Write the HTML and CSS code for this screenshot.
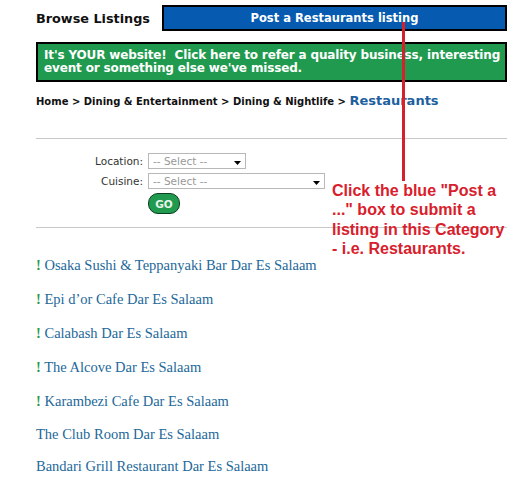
FILE: index.html
```html
<!DOCTYPE html>
<html>
<head>
<meta charset="utf-8">
<link rel="stylesheet" href="styles.css">
</head>
<body>
<div class="page">
  <div class="header">
    <div class="title">Browse Listings</div>
    <div class="post-box">Post a Restaurants listing</div>
  </div>
  <div class="refer">It's YOUR website!&nbsp; Click here to refer a quality business, interesting<br>event or something else we've missed.</div>
  <div class="crumbs">Home &gt; Dining &amp; Entertainment &gt; Dining &amp; Nightlife &gt; <span class="current">Restaurants</span></div>
  <div class="rule rule-top"></div>
  <div class="filters">
    <div class="frow">
      <span class="flabel">Location:</span>
      <span class="fselect short"><span>-- Select --</span><svg class="arrow" width="7" height="4" viewBox="0 0 7 4"><path d="M0 0H7L3.5 4Z" fill="#000"/></svg></span>
    </div>
    <div class="frow">
      <span class="flabel">Cuisine:</span>
      <span class="fselect long"><span>-- Select --</span><svg class="arrow" width="7" height="4" viewBox="0 0 7 4"><path d="M0 0H7L3.5 4Z" fill="#000"/></svg></span>
    </div>
    <div class="frow">
      <span class="flabel"></span>
      <span class="go">GO</span>
    </div>
  </div>
  <div class="rule rule-bottom"></div>
  <ul class="listings">
    <li class="featured"><span class="bang">!</span> Osaka Sushi &amp; Teppanyaki Bar Dar Es Salaam</li>
    <li class="featured"><span class="bang">!</span> Epi d’or Cafe Dar Es Salaam</li>
    <li class="featured"><span class="bang">!</span> Calabash Dar Es Salaam</li>
    <li class="featured"><span class="bang">!</span> The Alcove Dar Es Salaam</li>
    <li class="featured"><span class="bang">!</span> Karambezi Cafe Dar Es Salaam</li>
    <li>The Club Room Dar Es Salaam</li>
    <li>Bandari Grill Restaurant Dar Es Salaam</li>
  </ul>
  <div class="pointer"></div>
  <div class="note">Click the blue "Post a ..." box to submit a listing in this Category - i.e. Restaurants.</div>
</div>
</body>
</html>
```
FILE: styles.css
```css
html, body { margin: 0; padding: 0; background: #fff; }
.page {
  position: relative;
  width: 471px;
  padding: 5px 0 0 36px;
  font-family: "DejaVu Sans", Verdana, sans-serif;
}
.header { display: flex; align-items: center; }
.title { font-weight: bold; font-size: 12.8px; color: #111; width: 126px; }
.post-box {
  flex: 1;
  height: 22px;
  line-height: 22px;
  background: #065bb0;
  border: 2px solid #000;
  color: #fff;
  font-weight: bold;
  font-size: 11.5px;
  text-align: center;
}
.refer {
  margin-top: 11px;
  background: #1f9a4e;
  border: 2px solid #000;
  color: #fff;
  font-weight: bold;
  font-size: 12px;
  letter-spacing: -0.15px;
  line-height: 13px;
  padding: 5px 4px 5px 6px;
  white-space: nowrap;
  overflow: hidden;
}
.crumbs { margin-top: 11px; font-size: 10px; font-weight: bold; color: #111; }
.crumbs .current { color: #1e5f9e; font-size: 13px; }
.rule { height: 1px; background: #c8c8c8; }
.rule-top { margin-top: 30px; }
.filters { padding: 14px 0 0 0; }
.frow { display: flex; align-items: center; margin-bottom: 4px; }
.flabel { width: 107px; text-align: right; font-size: 10.5px; color: #333; padding-right: 5px; }
.fselect {
  display: flex; align-items: center; justify-content: space-between;
  height: 14px;
  border: 1px solid #b8b8b8;
  font-size: 10.5px; color: #999;
  padding: 0 4px 0 4px;
  box-sizing: content-box;
}
.fselect.short { width: 88px; }
.fselect.long { width: 167px; }
.arrow { margin-top: 3px; }
.go {
  width: 30px; height: 19px;
  border: 1px solid #0b3d1f;
  border-radius: 10px;
  background: #1f9a4e;
  color: #e8f4ec;
  font-weight: bold; font-size: 10.5px;
  display: flex; align-items: center; justify-content: center;
}
.rule-bottom { margin-top: 13px; }
.listings {
  list-style: none; margin: 0; padding: 0;
  font-family: "Liberation Serif", "DejaVu Serif", serif;
  font-size: 14.5px; color: #22689a;
}
.listings li { height: 34px; line-height: 34px; }
.listings li:first-child { margin-top: 20px; }
.listings li:not(.featured) { height: 32px; line-height: 32px; }
.bang { color: #2b9a48; font-weight: bold; }
.pointer {
  position: absolute; left: 402px; top: 22px;
  width: 3px; height: 159px; background: #d8202c;
}
.note {
  position: absolute; left: 332px; top: 181px; width: 174px;
  font-family: "Liberation Sans", Arial, sans-serif;
  font-weight: bold; font-size: 16px; line-height: 19.4px;
  color: #d8202c;
}
```
